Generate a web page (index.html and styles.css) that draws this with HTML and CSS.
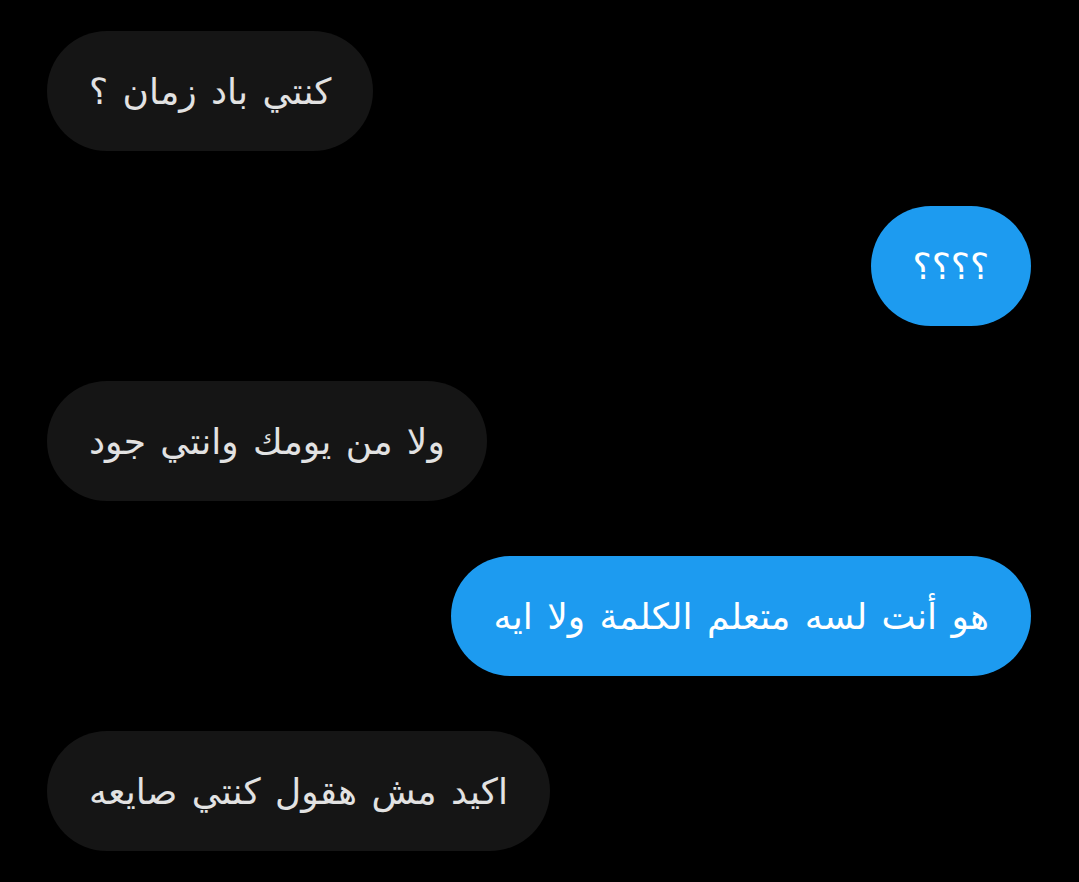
FILE: index.html
```html
<!DOCTYPE html>
<html lang="ar">
<head>
  <meta charset="UTF-8" />
  <title>Chat</title>
  <link rel="stylesheet" href="styles.css">
</head>
<body>

<div class="chat">
  <div class="bubble them">كنتي باد زمان ؟</div>
  <div class="bubble me">؟؟؟؟</div>
  <div class="bubble them">ولا من يومك وانتي جود</div>
  <div class="bubble me">هو أنت لسه متعلم الكلمة ولا ايه</div>
  <div class="bubble them">اكيد مش هقول كنتي صايعه</div>
</div>

</body>
</html>
```

FILE: styles.css
```css
body {
  margin: 0;
  padding: 0;
  background-color: #000;
  font-family: 'DejaVu Sans', 'Noto Sans', sans-serif;
}

.chat {
  display: flex;
  flex-direction: column;
  gap: 55px;
  padding: 31px 48px 0 47px;
}

.bubble {
  direction: rtl;
  height: 120px;
  box-sizing: border-box;
  display: flex;
  align-items: center;
  padding: 0 42px;
  border-radius: 60px;
  font-size: 36px;
  word-spacing: 3px;
  white-space: nowrap;
}

.them {
  align-self: flex-start;
  background-color: #151515;
  color: #e2e2e2;
}

.me {
  align-self: flex-end;
  background-color: #1d9bf0;
  color: #fff;
}
```
